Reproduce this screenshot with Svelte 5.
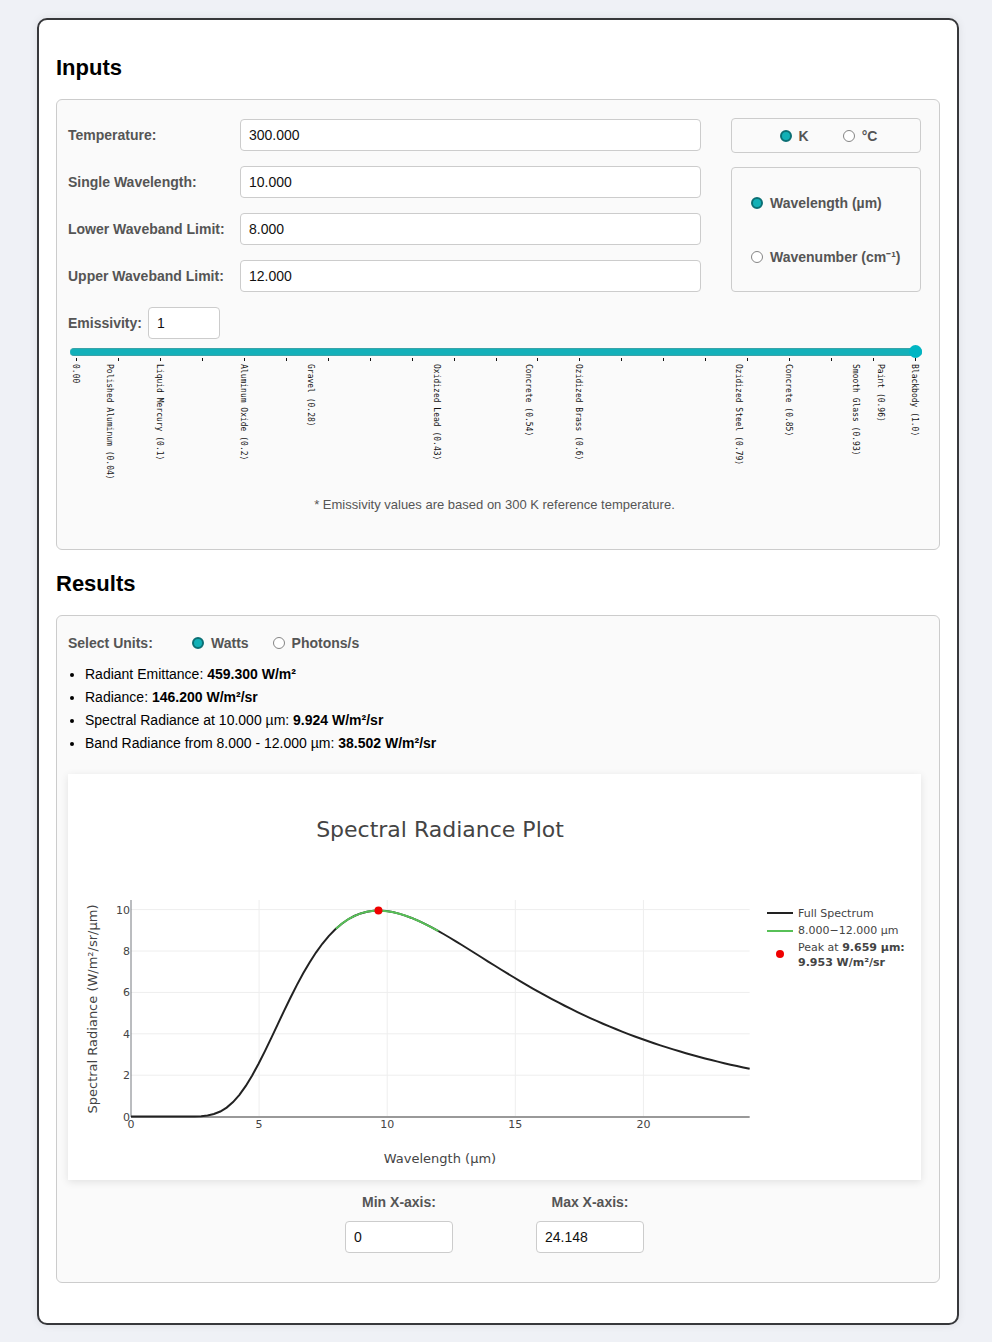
<script>
  let temperature = $state('300.000');
  let wavelength = $state('10.000');
  let lower = $state('8.000');
  let upper = $state('12.000');
  let emissivity = $state(1);
  let tempUnit = $state('K');
  let spectralUnit = $state('wavelength');
  let fluxUnit = $state('watts');
  let minX = $state('0');
  let maxX = $state('24.148');

  const ticks = Array.from({ length: 21 }, (_, i) => i * 5);
  const materials = [
    [0, '0.00'],
    [4, 'Polished Aluminum (0.04)'],
    [10, 'Liquid Mercury (0.1)'],
    [20, 'Aluminum Oxide (0.2)'],
    [28, 'Gravel (0.28)'],
    [43, 'Oxidized Lead (0.43)'],
    [54, 'Concrete (0.54)'],
    [60, 'Ozidized Brass (0.6)'],
    [79, 'Ozidized Steel (0.79)'],
    [85, 'Concrete (0.85)'],
    [93, 'Smooth Glass (0.93)'],
    [96, 'Paint (0.96)'],
    [100, 'Blackbody (1.0)']
  ];

  // Plot geometry, in viewBox units
  const left = 63;
  const base = 342.6;
  const sx = 25.62;
  const sy = 20.7;
  const end = 24.148;

  // Planck spectral radiance at 300 K, W/m²/sr/µm
  function planck(l) {
    if (l < 0.5) return 0;
    return 1.191043e8 / (l ** 5 * (Math.exp(14387.77 / (l * 300)) - 1));
  }
  function curve(a, b) {
    const n = Math.ceil((b - a) / 0.25);
    return Array.from({ length: n + 1 }, (_, i) => {
      const l = a + ((b - a) * i) / n;
      return `${(left + l * sx).toFixed(2)},${(base - planck(l) * sy).toFixed(2)}`;
    }).join(' ');
  }
</script>

<main class="card">
  <h2>Inputs</h2>
  <section class="panel inputs">
    <div class="columns">
      <div class="fields">
        <div class="field">
          <label for="temp">Temperature:</label>
          <input id="temp" type="text" bind:value={temperature} />
        </div>
        <div class="field">
          <label for="single">Single Wavelength:</label>
          <input id="single" type="text" bind:value={wavelength} />
        </div>
        <div class="field">
          <label for="lower">Lower Waveband Limit:</label>
          <input id="lower" type="text" bind:value={lower} />
        </div>
        <div class="field">
          <label for="upper">Upper Waveband Limit:</label>
          <input id="upper" type="text" bind:value={upper} />
        </div>
      </div>
      <div class="units">
        <div class="box temp-units">
          <label class="choice"><input type="radio" name="temp-unit" value="K" bind:group={tempUnit} />K</label>
          <label class="choice"><input type="radio" name="temp-unit" value="C" bind:group={tempUnit} />°C</label>
        </div>
        <div class="box spectral-units">
          <label class="choice"><input type="radio" name="spectral-unit" value="wavelength" bind:group={spectralUnit} />Wavelength (µm)</label>
          <label class="choice"><input type="radio" name="spectral-unit" value="wavenumber" bind:group={spectralUnit} />Wavenumber (cm⁻¹)</label>
        </div>
      </div>
    </div>

    <div class="emissivity">
      <label for="emis">Emissivity:</label>
      <input id="emis" type="text" bind:value={emissivity} />
    </div>
    <input class="slider" type="range" min="0" max="1" step="0.01" aria-label="Emissivity" bind:value={emissivity} />
    <div class="scale">
      {#each ticks as t}
        <span class="tick" style="left: {t}%"></span>
      {/each}
      {#each materials as [pos, name]}
        <span class="material" style="left: {pos}%">{name}</span>
      {/each}
    </div>
    <p class="note">* Emissivity values are based on 300 K reference temperature.</p>
  </section>

  <h2>Results</h2>
  <section class="panel results">
    <div class="select-units">
      <span class="caption">Select Units:</span>
      <label class="choice"><input type="radio" name="flux" value="watts" bind:group={fluxUnit} />Watts</label>
      <label class="choice"><input type="radio" name="flux" value="photons" bind:group={fluxUnit} />Photons/s</label>
    </div>
    <ul>
      <li>Radiant Emittance: <b>459.300 W/m²</b></li>
      <li>Radiance: <b>146.200 W/m²/sr</b></li>
      <li>Spectral Radiance at 10.000 µm: <b>9.924 W/m²/sr</b></li>
      <li>Band Radiance from 8.000 - 12.000 µm: <b>38.502 W/m²/sr</b></li>
    </ul>

    <div class="chart">
      <svg viewBox="0 0 853 406" role="img" aria-label="Spectral Radiance Plot">
        <text class="title" x="372" y="63" text-anchor="middle">Spectral Radiance Plot</text>
        {#each [2, 4, 6, 8, 10] as v}
          <line class="grid" x1={left} x2={left + end * sx} y1={base - v * sy} y2={base - v * sy} />
        {/each}
        {#each [5, 10, 15, 20] as v}
          <line class="grid" x1={left + v * sx} x2={left + v * sx} y1="126" y2={base} />
        {/each}
        <line class="axis-y" x1={left} x2={left} y1="126" y2="343" />
        <line class="axis-x" x1={left} x2={left + end * sx} y1="343" y2="343" />
        {#each [0, 2, 4, 6, 8, 10] as v}
          <text class="num" x={left - 1} y={base - v * sy + 4} text-anchor="end">{v}</text>
        {/each}
        {#each [0, 5, 10, 15, 20] as v}
          <text class="num" x={left + v * sx} y="354" text-anchor="middle">{v}</text>
        {/each}
        <polyline class="full" points={curve(0, end)} />
        <polyline class="band" points={curve(8, 12)} />
        <circle class="peak" cx={left + 9.659 * sx} cy={base - 9.953 * sy} r="4" />
        <text class="axis-name" x="372" y="389" text-anchor="middle">Wavelength (µm)</text>
        <text class="axis-name" transform="translate(29 235) rotate(-90)" text-anchor="middle">Spectral Radiance (W/m²/sr/µm)</text>

        <line class="full key" x1="699" x2="725" y1="139" y2="139" />
        <line class="band key" x1="699" x2="725" y1="157" y2="157" />
        <circle class="peak" cx="712" cy="180" r="4" />
        <text class="num" x="730" y="143">Full Spectrum</text>
        <text class="num" x="730" y="160">8.000−12.000 µm</text>
        <text class="num" x="730" y="177">Peak at <tspan class="strong">9.659 µm:</tspan></text>
        <text class="num strong" x="730" y="192">9.953 W/m²/sr</text>
      </svg>
    </div>

    <div class="range">
      <div class="bound">
        <label for="min-x">Min X-axis:</label>
        <input id="min-x" type="text" bind:value={minX} />
      </div>
      <div class="bound">
        <label for="max-x">Max X-axis:</label>
        <input id="max-x" type="text" bind:value={maxX} />
      </div>
    </div>
  </section>
</main>

<style>
  :global(body) {
    background: #eff1f6;
    font-family: "Liberation Sans", Arial, sans-serif;
    font-size: 15px;
    color: #000;
  }
  :global(#app) {
    display: flow-root;
  }
  .card {
    box-sizing: border-box;
    margin: 18px 33px 17px 37px;
    padding: 35px 17px 40px;
    background: #fff;
    border: 2px solid #37383b;
    border-radius: 10px;
    box-shadow: 0 0 8px rgba(0, 0, 0, 0.08);
  }
  h2 {
    margin: 0 0 18px;
    font-size: 22px;
    line-height: 26px;
  }
  .panel {
    background: #fafafa;
    border: 1px solid #ccc;
    border-radius: 6px;
  }
  .inputs {
    padding: 18px 18px 35px 11px;
    margin-bottom: 21px;
  }
  .results {
    padding: 18px 18px 29px 11px;
  }
  label,
  .caption {
    font-size: 14px;
    font-weight: bold;
    color: #555;
    white-space: nowrap;
  }
  input[type="text"] {
    box-sizing: border-box;
    height: 32px;
    min-width: 0;
    padding: 0 8px;
    border: 1px solid #ccc;
    border-radius: 4px;
    background: #fff;
    font: inherit;
    font-size: 14px;
    color: #111;
  }
  .columns {
    display: grid;
    grid-template-columns: 1fr 190px;
    gap: 30px;
  }
  .fields {
    display: flex;
    flex-direction: column;
    gap: 15px;
    padding-top: 1px;
  }
  .field {
    display: grid;
    grid-template-columns: 172px 1fr;
    align-items: center;
  }
  .units {
    display: flex;
    flex-direction: column;
    gap: 14px;
  }
  .box {
    box-sizing: border-box;
    display: flex;
    border: 1px solid #ccc;
    border-radius: 4px;
  }
  .temp-units {
    height: 35px;
    align-items: center;
    justify-content: center;
    gap: 34px;
    padding-left: 5px;
  }
  .spectral-units {
    flex: 1;
    flex-direction: column;
    justify-content: center;
    gap: 36px;
    padding-left: 19px;
  }
  .choice {
    display: flex;
    align-items: center;
    gap: 7px;
    line-height: 18px;
  }
  input[type="radio"] {
    appearance: none;
    box-sizing: border-box;
    width: 12px;
    height: 12px;
    margin: 0;
    border: 1px solid #858585;
    border-radius: 50%;
    background: #fff;
  }
  input[type="radio"]:checked {
    border: 2px solid #0b6f74;
    background: #12b0b6;
  }
  .emissivity {
    display: flex;
    align-items: center;
    gap: 6px;
    margin-top: 15px;
  }
  .emissivity input {
    width: 72px;
  }
  .slider {
    appearance: none;
    display: block;
    width: calc(100% - 1px);
    height: 13px;
    margin: 6px 0 0 2px;
    box-sizing: border-box;
    background: transparent;
  }
  .slider::-webkit-slider-runnable-track {
    box-sizing: border-box;
    height: 8px;
    border: solid #3aa3a8;
    border-width: 1px 0;
    border-radius: 4px;
    background: #13b0b9;
  }
  .slider::-webkit-slider-thumb {
    appearance: none;
    width: 13px;
    height: 13px;
    margin-top: -4px;
    border-radius: 50%;
    background: #00b5c3;
  }
  .scale {
    position: relative;
    height: 138px;
    margin: 0 6px 0 8px;
  }
  .tick {
    position: absolute;
    top: 0;
    width: 1px;
    height: 3px;
    background: #111;
  }
  .material {
    position: absolute;
    top: 6px;
    writing-mode: vertical-rl;
    transform: translateX(-60%);
    font-family: "DejaVu Sans Mono", monospace;
    font-size: 8px;
    line-height: 10px;
    white-space: nowrap;
    color: #111;
  }
  .note {
    margin: 0;
    font-size: 13px;
    line-height: 18px;
    text-align: center;
    color: #555;
  }
  .select-units {
    display: flex;
    align-items: center;
    line-height: 18px;
    gap: 24px;
  }
  .caption {
    width: 100px;
  }
  ul {
    margin: 11px 0 19px;
    padding-left: 17px;
    font-size: 14px;
    line-height: 23px;
  }
  .chart {
    background: #fff;
    box-shadow: 0 2px 8px rgba(0, 0, 0, 0.1);
  }
  .chart svg {
    display: block;
    width: 100%;
    font-family: "DejaVu Sans", sans-serif;
    fill: #444;
  }
  .title {
    font-size: 22px;
  }
  .axis-name {
    font-size: 13px;
  }
  .num {
    font-size: 11px;
  }
  .strong {
    font-weight: bold;
  }
  .grid {
    stroke: #eee;
  }
  .axis-y {
    stroke: #777b80;
    stroke-width: 1;
  }
  .axis-x {
    stroke: #999;
    stroke-width: 2;
  }
  .full,
  .band {
    fill: none;
    stroke: #222;
    stroke-width: 2;
  }
  .band {
    stroke: #57c057;
  }
  .key {
    shape-rendering: crispEdges;
  }
  .peak {
    fill: #f00000;
  }
  .range {
    display: flex;
    justify-content: center;
    gap: 83px;
    margin-top: 13px;
  }
  .bound {
    display: flex;
    flex-direction: column;
    align-items: center;
    gap: 10px;
    line-height: 18px;
  }
  .bound input {
    width: 108px;
  }
</style>
